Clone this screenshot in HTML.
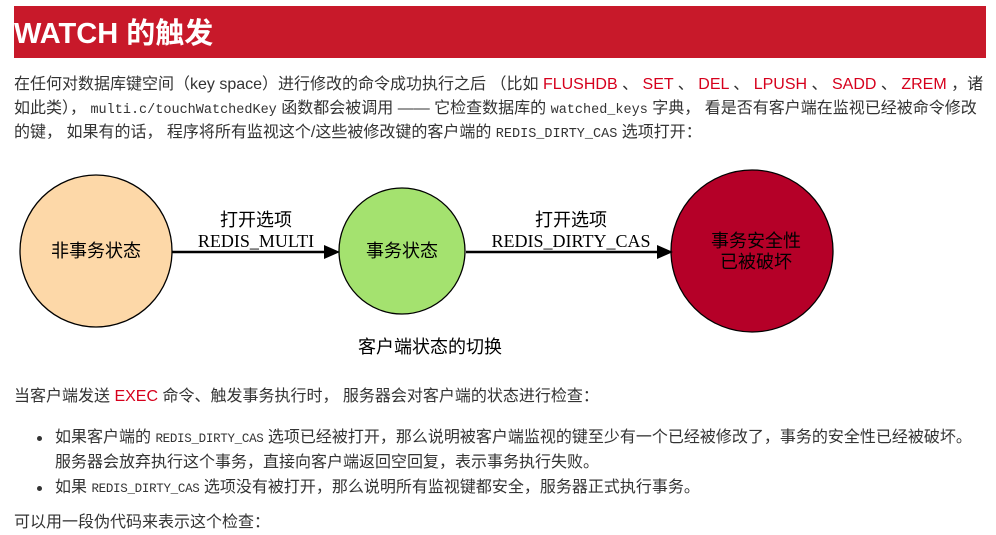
<!DOCTYPE html>
<html><head><meta charset="utf-8"><style>
body{margin:0;width:996px;height:524px;overflow:hidden;background:#fff;font-family:"Liberation Sans","Noto Sans CJK SC",sans-serif;color:#333;}
.h{position:absolute;left:14px;top:6px;width:972px;height:52px;background:#c8192a;color:#fff;font-weight:bold;font-size:29px;line-height:56px;}
.l{position:absolute;left:14px;font-size:16px;white-space:nowrap;line-height:24px;}
.r{color:#d6001c}
code{font-family:"Liberation Mono",monospace;font-size:13.5px;}
.b{font-size:16px;}
.b code{font-size:12.5px;letter-spacing:-0.3px}
.dot{position:absolute;width:5px;height:5px;border-radius:50%;background:#333;left:37px}
</style></head><body>
<div class="h">WATCH 的触发</div>
<div class="l" style="top:73px">在任何对数据库键空间（key space）进行修改的命令成功执行之后 （比如 <span class="r">FLUSHDB</span> 、 <span class="r">SET</span> 、 <span class="r">DEL</span> 、 <span class="r">LPUSH</span> 、 <span class="r">SADD</span> 、 <span class="r">ZREM</span> ，诸</div>
<div class="l" style="top:97px">如此类）， <code>multi.c/touchWatchedKey</code> 函数都会被调用 —— 它检查数据库的 <code>watched_keys</code> 字典， 看是否有客户端在监视已经被命令修改</div>
<div class="l" style="top:121px">的键， 如果有的话， 程序将所有监视这个/这些被修改键的客户端的 <code>REDIS_DIRTY_CAS</code> 选项打开：</div>
<svg style="position:absolute;left:0;top:0" width="996" height="524">
<g font-family="Liberation Serif,Noto Serif CJK SC,serif" font-size="18" fill="#000" text-anchor="middle">
<circle cx="96" cy="251" r="76" fill="#fdd8a8" stroke="#000" stroke-width="1.3"/>
<circle cx="402" cy="251" r="63" fill="#a4e26f" stroke="#000" stroke-width="1.3"/>
<circle cx="752" cy="251" r="81" fill="#b50028" stroke="#000" stroke-width="1.3"/>
<line x1="172" y1="252" x2="326" y2="252" stroke="#000" stroke-width="2.5"/>
<polygon points="324,245 340,252 324,259" fill="#000"/>
<line x1="466" y1="252" x2="659" y2="252" stroke="#000" stroke-width="2.5"/>
<polygon points="657,245 673,252 657,259" fill="#000"/>
<text x="96" y="257" font-family="Noto Sans CJK SC,sans-serif" font-size="18">非事务状态</text>
<text x="402" y="257" font-family="Noto Sans CJK SC,sans-serif" font-size="18">事务状态</text>
<text x="756" y="247" font-family="Noto Sans CJK SC,sans-serif" font-size="18">事务安全性</text>
<text x="756" y="268" font-family="Noto Sans CJK SC,sans-serif" font-size="18">已被破坏</text>
<text x="256" y="226" font-family="Noto Sans CJK SC,sans-serif">打开选项</text>
<text x="256" y="247">REDIS_MULTI</text>
<text x="571" y="226" font-family="Noto Sans CJK SC,sans-serif">打开选项</text>
<text x="571" y="247">REDIS_DIRTY_CAS</text>
<text x="430" y="353" font-family="Noto Sans CJK SC,sans-serif">客户端状态的切换</text>
</g></svg>
<div class="l b" style="top:385px">当客户端发送 <span class="r">EXEC</span> 命令、触发事务执行时， 服务器会对客户端的状态进行检查：</div>
<div class="dot" style="top:436px"></div>
<div class="l b" style="top:426px;left:55px">如果客户端的 <code>REDIS_DIRTY_CAS</code> 选项已经被打开，那么说明被客户端监视的键至少有一个已经被修改了，事务的安全性已经被破坏。</div>
<div class="l b" style="top:451px;left:55px">服务器会放弃执行这个事务，直接向客户端返回空回复，表示事务执行失败。</div>
<div class="dot" style="top:486px"></div>
<div class="l b" style="top:476px;left:55px">如果 <code>REDIS_DIRTY_CAS</code> 选项没有被打开，那么说明所有监视键都安全，服务器正式执行事务。</div>
<div class="l b" style="top:511px">可以用一段伪代码来表示这个检查：</div>
</body></html>
